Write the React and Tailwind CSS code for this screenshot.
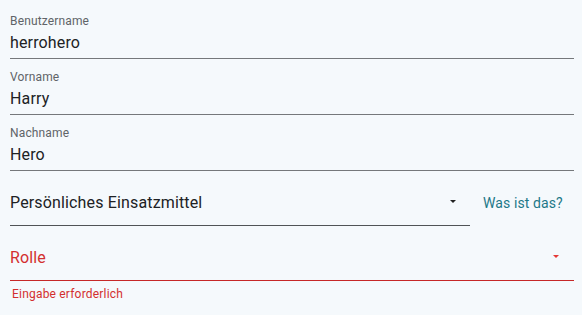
function TextField({ label, value }) {
  return (
    <div className="pt-[10px] pb-[3px] border-b border-[#75787b]">
      <div className="text-[12px] leading-[16px] tracking-[0.15px] text-[#606468]">{label}</div>
      <div className="mt-[2px] text-[16px] leading-[24px] tracking-[0.15px] text-[#202224]">{value}</div>
    </div>
  );
}

function Arrow({ color }) {
  return (
    <svg width="6" height="3" viewBox="0 0 6 3" className="shrink-0">
      <path d="M0 0h6L3 3z" fill={color} />
    </svg>
  );
}

export default function App() {
  return (
    <div
      className="w-[582px] h-[315px] bg-[#f5f9fc] pl-[10px] pr-[8px] pt-[3px]"
      style={{ fontFamily: "Roboto, 'Liberation Sans', sans-serif" }}
    >
      <TextField label="Benutzername" value="herrohero" />
      <TextField label="Vorname" value="Harry" />
      <TextField label="Nachname" value="Hero" />

      <div className="flex items-start">
        <div className="w-[460px] flex items-center justify-between pt-[20px] pb-[10px] border-b border-[#505356]">
          <span className="text-[16px] leading-[24px] tracking-[0.15px] text-[#202224]">Persönliches Einsatzmittel</span>
          <span className="mr-[14px] mt-[-4px]">
            <Arrow color="#222" />
          </span>
        </div>
        <span className="ml-[13px] pt-[22px] text-[14px] leading-[20px] tracking-[0.1px] text-[#1d7888]">Was ist das?</span>
      </div>

      <div className="flex items-center justify-between pt-[20px] pb-[10px] border-b border-[#c62828]">
        <span className="text-[16px] leading-[24px] tracking-[0.15px] text-[#d32f2f]">Rolle</span>
        <span className="mr-[15px] mt-[-4px]">
          <Arrow color="#e53935" />
        </span>
      </div>
      <div className="mt-[3px] pl-[2px] text-[12px] leading-[20px] tracking-[0.2px] text-[#d32f2f]">Eingabe erforderlich</div>
    </div>
  );
}
